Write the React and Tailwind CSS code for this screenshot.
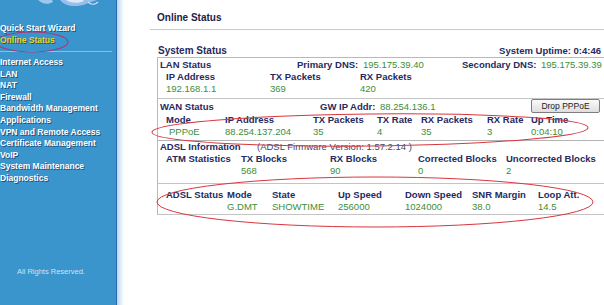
import React from 'react';

const menu = [
  'Internet Access',
  'LAN',
  'NAT',
  'Firewall',
  'Bandwidth Management',
  'Applications',
  'VPN and Remote Access',
  'Certificate Management',
  'VoIP',
  'System Maintenance',
  'Diagnostics',
];

const H = 'font-bold text-[#262a5e]';
const V = 'text-[#3b8e3b]';

function Sidebar() {
  return (
    <div className="flex flex-col w-[116px] h-full bg-[#3995cc] shrink-0">
      <svg className="ml-[36px] block" width="64" height="8" viewBox="0 0 64 8">
        <path d="M2 0 C6 4 12 5 17 2 L16 0 Z" fill="#b7d3f2" opacity="0.8" />
        <path d="M24 0 C28 6 40 8 50 4 C54 2 58 1 61 0 Z" fill="#a9c6ee" opacity="0.85" />
        <path d="M30 0 C34 3 42 4 48 1 L47 0 Z" fill="#e6eefc" opacity="0.9" />
        <path d="M52 2 C55 5 59 5 62 2" stroke="#d8e4fa" strokeWidth="1.2" fill="none" />
      </svg>
      <div className="mt-[14px] leading-[12px] text-[8.5px] font-bold text-white [text-shadow:1px_1px_0_#1f5184]">
        <div>Quick Start Wizard</div>
        <div className="text-[#f2d21a]">Online Status</div>
      </div>
      <div className="mt-[5px] h-px w-[112px] bg-[#cdb07c]" />
      <ul className="mt-[5px] leading-[11.6px] text-[8.5px] font-bold text-white [text-shadow:1px_1px_0_#1f5184]">
        {menu.map((m) => (
          <li key={m}>{m}</li>
        ))}
      </ul>
      <div className="mt-auto mb-[28px] pl-[17px] text-[7.5px] leading-[10px] text-[#d3e2f0]">
        All Rights Reserved.
      </div>
    </div>
  );
}

function Content() {
  return (
    <div className="flex-1 pl-[26px] text-[9.5px]">
      <div className="h-[30px] pt-3 leading-3 border-b border-[#c9c9c9] pl-[7px] text-[10px] font-bold text-[#1c2246]">
        Online Status
      </div>
      <div className={`mt-[15px] h-3 leading-3 flex justify-between pl-[8px] pr-[3px] ${H}`}>
        <span className="text-[10px]">System Status</span>
        <span>System Uptime: 0:4:46</span>
      </div>

      <div className="ml-[7px] border-l border-t border-[#b9b9b9] leading-3 whitespace-nowrap">
        {/* LAN */}
        <div className="h-[41px] pt-px border-b border-[#c4c4c4]">
          <div className="grid grid-cols-[2px_137px_66px_99px_79px_1fr] h-3">
            <span />
            <span className={H}>LAN Status</span>
            <span className={H}>Primary DNS:</span>
            <span className={V}>195.175.39.40</span>
            <span className={H}>Secondary DNS:</span>
            <span className={V}>195.175.39.39</span>
          </div>
          <div className={`grid grid-cols-[8px_104px_90px_1fr] h-3 ${H}`}>
            <span />
            <span>IP Address</span>
            <span>TX Packets</span>
            <span>RX Packets</span>
          </div>
          <div className={`grid grid-cols-[8px_104px_90px_1fr] h-3 ${V}`}>
            <span />
            <span>192.168.1.1</span>
            <span>369</span>
            <span>420</span>
          </div>
        </div>

        {/* WAN */}
        <div className="h-[42px] border-b border-[#b4b4b4]">
          <div className="grid grid-cols-[2px_160px_60px_151px_69px] h-[15px] items-center">
            <span />
            <span className={H}>WAN Status</span>
            <span className={H}>GW IP Addr:</span>
            <span className={V}>88.254.136.1</span>
            <button className="h-[14px] -mt-[1px] rounded-[2px] border border-[#7d7d7d] bg-gradient-to-b from-[#fafafa] to-[#dedede] text-[8.5px] leading-[12px] text-[#222]">
              Drop PPPoE
            </button>
          </div>
          <div className={`grid grid-cols-[8px_59px_88px_64px_44px_66px_44px_1fr] h-3 ${H}`}>
            <span />
            <span>Mode</span>
            <span>IP Address</span>
            <span>TX Packets</span>
            <span>TX Rate</span>
            <span>RX Packets</span>
            <span>RX Rate</span>
            <span>Up Time</span>
          </div>
          <div className={`grid grid-cols-[8px_59px_88px_64px_44px_66px_44px_1fr] h-3 ${V}`}>
            <span />
            <span className="pl-[3px]">PPPoE</span>
            <span>88.254.137.204</span>
            <span>35</span>
            <span>4</span>
            <span>35</span>
            <span>3</span>
            <span>0:04:10</span>
          </div>
        </div>

        {/* ADSL info */}
        <div className="h-[43px] border-b border-[#c4c4c4]">
          <div className="grid grid-cols-[2px_97px_1fr] h-3">
            <span />
            <span className={H}>ADSL Information</span>
            <span className="text-[#45476a]">(ADSL Firmware Version: 1.57.2.14 )</span>
          </div>
          <div className={`grid grid-cols-[8px_75px_89px_88px_88px_1fr] h-3 ${H}`}>
            <span />
            <span>ATM Statistics</span>
            <span>TX Blocks</span>
            <span>RX Blocks</span>
            <span>Corrected Blocks</span>
            <span>Uncorrected Blocks</span>
          </div>
          <div className={`grid grid-cols-[8px_75px_89px_88px_88px_1fr] h-3 ${V}`}>
            <span />
            <span />
            <span>568</span>
            <span>90</span>
            <span>0</span>
            <span>2</span>
          </div>
        </div>

        {/* ADSL status */}
        <div className="h-[31px] pt-[5px] border-b border-[#c4c4c4]">
          <div className={`grid grid-cols-[8px_61px_45px_66px_67px_67px_66px_1fr] h-3 ${H}`}>
            <span />
            <span>ADSL Status</span>
            <span>Mode</span>
            <span>State</span>
            <span>Up Speed</span>
            <span>Down Speed</span>
            <span>SNR Margin</span>
            <span>Loop Att.</span>
          </div>
          <div className={`grid grid-cols-[8px_61px_45px_66px_67px_67px_66px_1fr] h-3 ${V}`}>
            <span />
            <span />
            <span>G.DMT</span>
            <span>SHOWTIME</span>
            <span>256000</span>
            <span>1024000</span>
            <span>38.0</span>
            <span>14.5</span>
          </div>
        </div>
      </div>
    </div>
  );
}

export default function App() {
  return (
    <div className="relative flex w-[604px] h-[305px] overflow-hidden bg-white font-['Liberation_Sans',Arial,sans-serif]">
      <Sidebar />
      <div className="w-px h-full bg-[#2a6aab] shrink-0" />
      <div className="w-[7px] h-full bg-gradient-to-r from-[#bcd6f5] to-white shrink-0" />
      <Content />

      {/* red hand-drawn annotations */}
      <svg className="absolute left-0 top-0 pointer-events-none" width="604" height="305">
        <ellipse cx="32" cy="42" rx="36" ry="10" fill="none" stroke="#a8387a" strokeWidth="1.1" />
        <ellipse cx="370" cy="130" rx="218" ry="16" fill="none" stroke="#d9363e" strokeWidth="1" transform="rotate(-0.6 370 130)" />
        <ellipse cx="375" cy="202" rx="218" ry="25" fill="none" stroke="#d9363e" strokeWidth="1" />
      </svg>
    </div>
  );
}
